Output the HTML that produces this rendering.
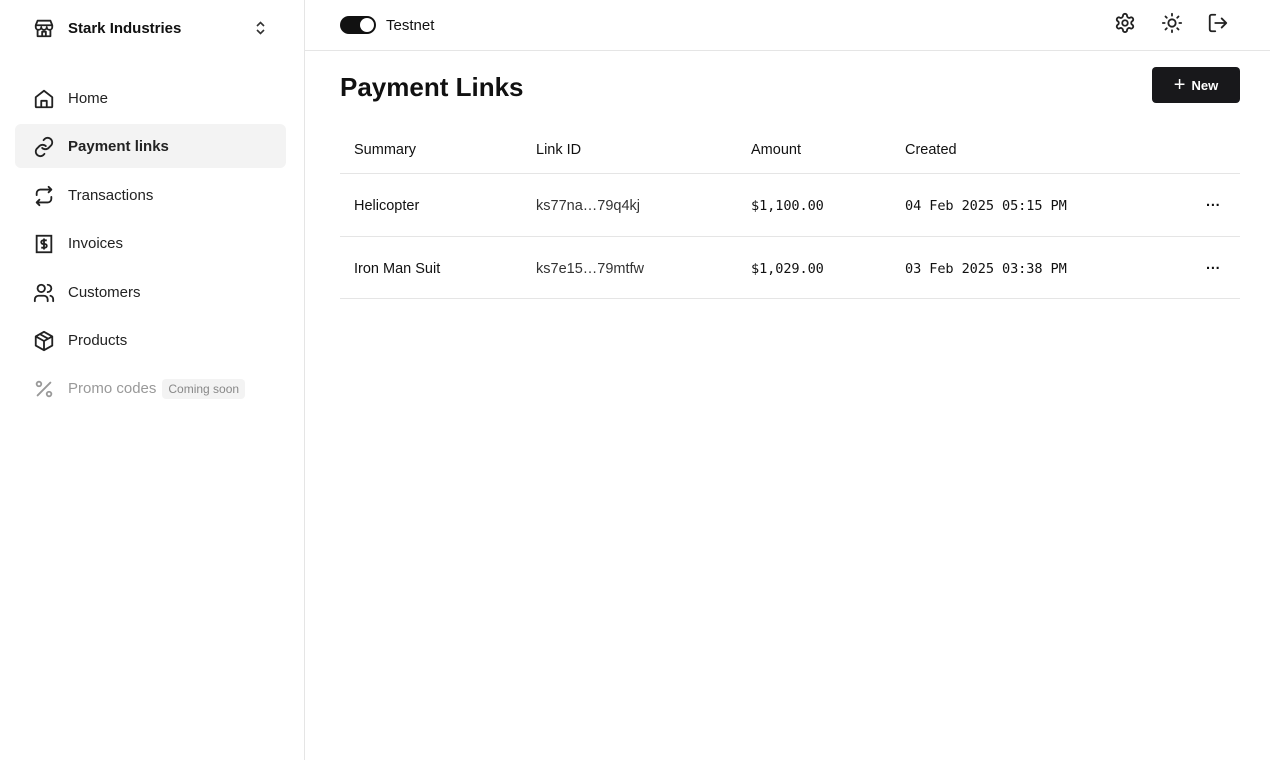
<!DOCTYPE html>
<html><head><meta charset="utf-8"><style>
*{box-sizing:border-box;margin:0;padding:0}
body{width:1270px;height:760px;background:#fff;font-family:"Liberation Sans",sans-serif;color:#111;position:relative;overflow:hidden}
.side{position:absolute;left:0;top:0;width:305px;height:760px;border-right:1px solid #e5e5e5}
.brand{position:absolute;left:33px;top:17px;display:flex;align-items:center;font-weight:bold;font-size:15px}
.brand svg{margin-right:13px}
.item{position:absolute;left:15px;width:271px;height:44px;border-radius:6px;display:flex;align-items:center;padding-left:18px;padding-top:1px;font-size:15px;color:#222}
.item svg{margin-right:13px;flex:none}
.item.active{background:#f3f3f3;font-weight:bold}
.item.dis{color:#999}
.badge{background:#f3f3f3;color:#888;font-size:12px;padding:3px 6px;border-radius:4px;margin-left:6px}
.top{position:absolute;left:305px;right:0;top:0;height:51px;border-bottom:1px solid #e5e5e5}
.tog{position:absolute;left:35px;top:16px;width:36px;height:18px;border-radius:9px;background:#111}
.tog:after{content:"";position:absolute;right:2px;top:2px;width:14px;height:14px;border-radius:50%;background:#fff}
.tn{position:absolute;left:81px;top:17px;font-size:15px}
h1{position:absolute;left:340px;top:72px;font-size:26px;font-weight:bold}
.new{position:absolute;left:1152px;top:67px;width:88px;height:36px;background:#18181b;border-radius:4px;color:#fff;font-size:13px;font-weight:bold;display:flex;align-items:center;justify-content:center;gap:6px}
.row{position:absolute;left:340px;width:900px;border-bottom:1px solid #e5e5e5;font-size:14.5px}
.row span{position:absolute;top:50%;transform:translateY(-45%)}
.mono{font-family:"DejaVu Sans Mono","Liberation Mono",monospace;font-size:13.6px;letter-spacing:-0.1px}
</style></head><body>
<div class="side">
<div class="brand"><svg width="22" height="22" viewBox="0 0 24 24" fill="none" stroke="#222" stroke-width="2" stroke-linejoin="round"><path d="M3 9l2-5h14l2 5M3 9h18v2a3 3 0 01-6 0 3 3 0 01-6 0 3 3 0 01-6 0zM5 13v8h14v-8M10 21v-5h4v5"/></svg>Stark Industries</div>
<svg style="position:absolute;left:254px;top:20px" width="13" height="16" viewBox="0 0 13 16" fill="none" stroke="#333" stroke-width="1.6"><path d="M3 6l3.5-3.5L10 6M3 10l3.5 3.5L10 10"/></svg>
<div class="item" style="top:76px"><svg width="22" height="22" viewBox="0 0 24 24" fill="none" stroke="#222" stroke-width="2" stroke-linejoin="round"><path d="M3 10l9-7 9 7v10a1 1 0 01-1 1H4a1 1 0 01-1-1zM9 21v-7h6v7"/></svg>Home</div>
<div class="item active" style="top:124px"><svg width="22" height="22" viewBox="0 0 24 24" fill="none" stroke="#222" stroke-width="2" stroke-linecap="round"><path d="M10 13a5 5 0 007 0l3-3a5 5 0 00-7-7l-1.5 1.5M14 11a5 5 0 00-7 0l-3 3a5 5 0 007 7l1.5-1.5"/></svg>Payment links</div>
<div class="item" style="top:173px"><svg width="22" height="22" viewBox="0 0 24 24" fill="none" stroke="#222" stroke-width="2" stroke-linecap="round" stroke-linejoin="round"><path d="M17 2l3 3-3 3M4 11V9a4 4 0 014-4h12M7 22l-3-3 3-3M20 13v2a4 4 0 01-4 4H4"/></svg>Transactions</div>
<div class="item" style="top:221px"><svg width="22" height="22" viewBox="0 0 24 24" fill="none" stroke="#222" stroke-width="2"><rect x="4" y="3" width="16" height="18"/><path d="M15 8h-4a2 2 0 000 4h2a2 2 0 010 4H9M12 6v12"/></svg>Invoices</div>
<div class="item" style="top:270px"><svg width="22" height="22" viewBox="0 0 24 24" fill="none" stroke="#222" stroke-width="2" stroke-linecap="round"><circle cx="9" cy="7" r="4"/><path d="M2 21v-2a4 4 0 014-4h6a4 4 0 014 4v2M16 3a4 4 0 010 8M22 21v-2a4 4 0 00-3-4"/></svg>Customers</div>
<div class="item" style="top:318px"><svg width="22" height="22" viewBox="0 0 24 24" fill="none" stroke="#222" stroke-width="2" stroke-linejoin="round"><path d="M12 2l9 5v10l-9 5-9-5V7zM3 7l9 5 9-5M12 12v10M7.5 4.5l9 5"/></svg>Products</div>
<div class="item dis" style="top:366px"><svg width="22" height="22" viewBox="0 0 24 24" fill="none" stroke="#999" stroke-width="2" stroke-linecap="round"><path d="M19 5L5 19"/><circle cx="6.5" cy="6.5" r="2.5"/><circle cx="17.5" cy="17.5" r="2.5"/></svg>Promo codes<span class="badge">Coming soon</span></div>
</div>
<div class="top">
<div class="tog"></div><div class="tn">Testnet</div>
<svg style="position:absolute;left:809px;top:12px" width="22" height="22" viewBox="0 0 24 24" fill="none" stroke="#222" stroke-width="2"><circle cx="12" cy="12" r="3"/><path d="M12.2 2h-.4a2 2 0 00-2 2v.2a2 2 0 01-1 1.7l-.4.3a2 2 0 01-2 0l-.2-.1a2 2 0 00-2.7.7l-.2.4a2 2 0 00.7 2.7l.2.1a2 2 0 011 1.7v.5a2 2 0 01-1 1.7l-.2.1a2 2 0 00-.7 2.7l.2.4a2 2 0 002.7.7l.2-.1a2 2 0 012 0l.4.3a2 2 0 011 1.7v.2a2 2 0 002 2h.4a2 2 0 002-2v-.2a2 2 0 011-1.7l.4-.3a2 2 0 012 0l.2.1a2 2 0 002.7-.7l.2-.4a2 2 0 00-.7-2.7l-.2-.1a2 2 0 01-1-1.7v-.5a2 2 0 011-1.7l.2-.1a2 2 0 00.7-2.7l-.2-.4a2 2 0 00-2.7-.7l-.2.1a2 2 0 01-2 0l-.4-.3a2 2 0 01-1-1.7V4a2 2 0 00-2-2z"/></svg>
<svg style="position:absolute;left:856px;top:12px" width="22" height="22" viewBox="0 0 24 24" fill="none" stroke="#222" stroke-width="2" stroke-linecap="round"><circle cx="12" cy="12" r="4"/><path d="M12 2v2M12 20v2M4.9 4.9l1.4 1.4M17.7 17.7l1.4 1.4M2 12h2M20 12h2M6.3 17.7l-1.4 1.4M19.1 4.9l-1.4 1.4"/></svg>
<svg style="position:absolute;left:902px;top:12px" width="22" height="22" viewBox="0 0 24 24" fill="none" stroke="#222" stroke-width="2" stroke-linecap="round" stroke-linejoin="round"><path d="M9 21H5a2 2 0 01-2-2V5a2 2 0 012-2h4M16 17l5-5-5-5M21 12H9"/></svg>
</div>
<h1>Payment Links</h1>
<div class="new"><span style="font-size:20px;font-weight:normal;line-height:1">+</span>New</div>
<div class="row" style="top:124px;height:50px"><span style="left:14px">Summary</span><span style="left:196px">Link ID</span><span style="left:411px">Amount</span><span style="left:565px">Created</span></div>
<div class="row" style="top:174px;height:63px"><span style="left:14px">Helicopter</span><span style="left:196px;color:#333">ks77na…79q4kj</span><span class="mono" style="left:411px">$1,100.00</span><span class="mono" style="left:565px">04 Feb 2025 05:15 PM</span><span style="left:866px;font-weight:bold">···</span></div>
<div class="row" style="top:237px;height:62px"><span style="left:14px">Iron Man Suit</span><span style="left:196px;color:#333">ks7e15…79mtfw</span><span class="mono" style="left:411px">$1,029.00</span><span class="mono" style="left:565px">03 Feb 2025 03:38 PM</span><span style="left:866px;font-weight:bold">···</span></div>
</body></html>
